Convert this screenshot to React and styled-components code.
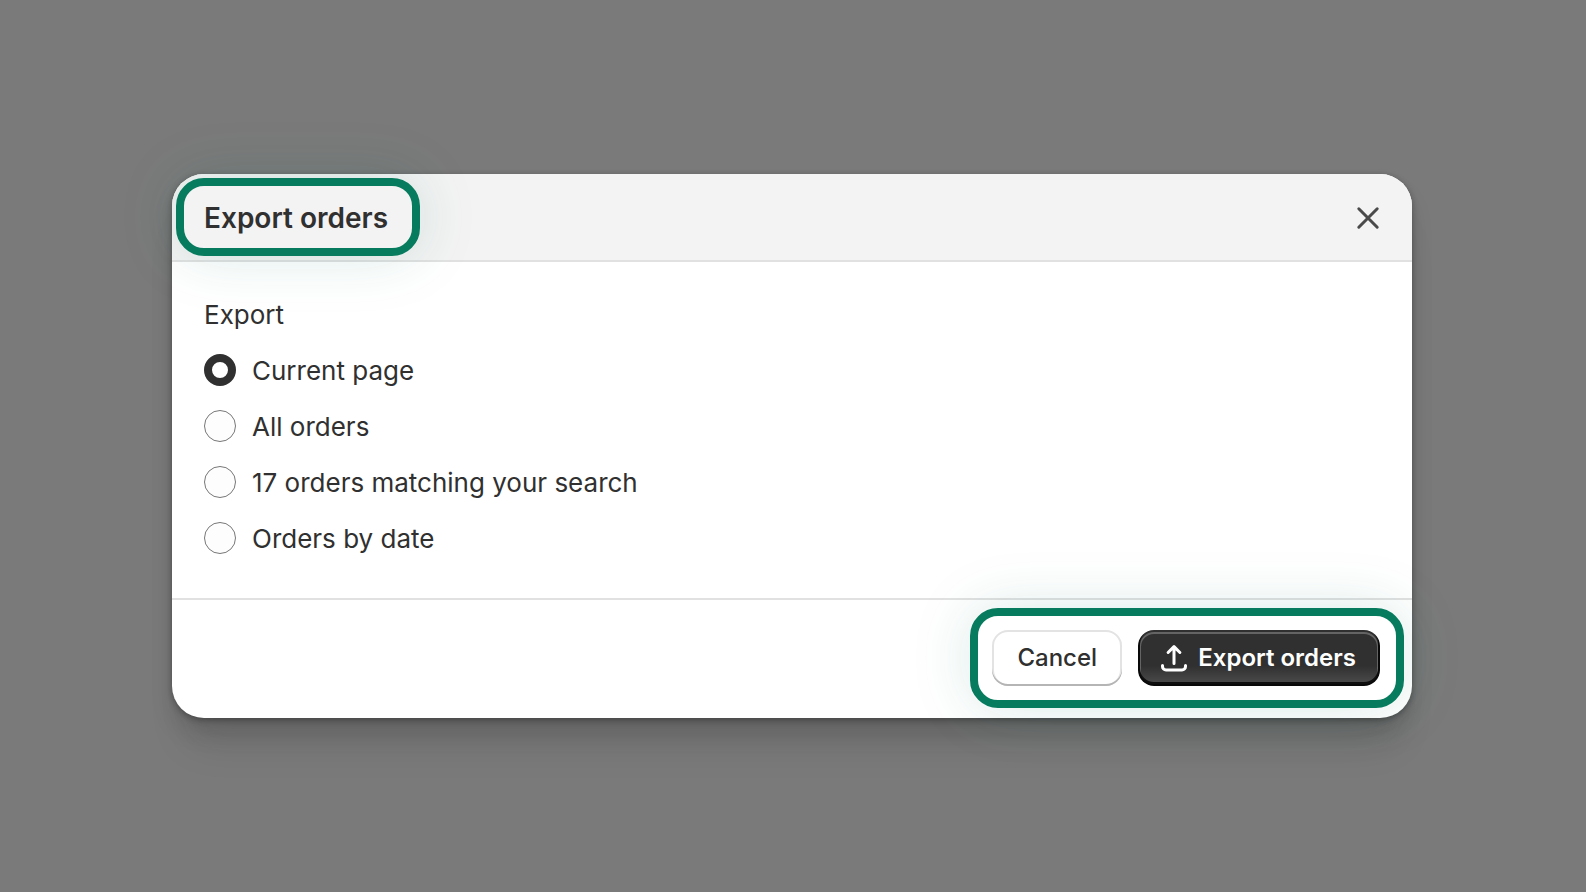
import React, { useState } from "react";
import styled, { createGlobalStyle } from "styled-components";

const GlobalStyle = createGlobalStyle`
  * {
    box-sizing: border-box;
  }
  body {
    margin: 0;
    background-color: #7a7a7a;
    color: #303030;
    font-family: Inter, "Liberation Sans", sans-serif;
    -webkit-font-smoothing: antialiased;
  }
`;

const Backdrop = styled.main`
  display: flex;
  align-items: center;
  min-height: 100vh;
  padding: 32px 174px 32px 172px;
`;

const Dialog = styled.section`
  flex: 1;
  background-color: #fff;
  border-radius: 32px;
  box-shadow: 0 40px 40px -16px rgba(26, 26, 26, 0.12),
    0 16px 24px -4px rgba(26, 26, 26, 0.18),
    0 2px 6px rgba(26, 26, 26, 0.4);
`;

const Header = styled.header`
  display: flex;
  align-items: center;
  justify-content: space-between;
  padding: 4px 24px 4px 4px;
  background-color: #f3f3f3;
  border-bottom: 2px solid #e1e1e1;
  border-radius: 32px 32px 0 0;
`;

const Highlight = styled.div`
  position: relative;
  z-index: 1;
  display: flex;
  align-items: center;
  gap: 16px;
  padding: ${(props) => props.$padding};
  border: 8px solid #077b5e;
  border-radius: 28px;
  box-shadow: 0 0 60px rgba(8, 124, 104, 0.15);
`;

const Title = styled.h2`
  margin: 0;
  font-size: 28px;
  line-height: 40px;
  font-weight: 600;
`;

const CloseButton = styled.button`
  display: flex;
  padding: 2px 0 0;
  border: none;
  background: none;
  color: #4a4a4a;
  cursor: pointer;
`;

const Icon = styled.svg`
  width: 40px;
  height: 40px;
  fill: none;
  stroke: currentColor;
  stroke-width: 1.5;
  stroke-linecap: round;
  stroke-linejoin: round;
`;

const Options = styled.fieldset`
  display: flex;
  flex-direction: column;
  align-items: flex-start;
  gap: 14px;
  margin: 0;
  padding: 32px 32px 38px;
  border: none;
  font-size: 26px;
  line-height: 42px;
`;

const Legend = styled.legend`
  float: left;
  padding: 0;
`;

const Option = styled.label`
  display: flex;
  align-items: center;
  gap: 16px;
  cursor: pointer;
`;

const Radio = styled.input`
  appearance: none;
  width: 32px;
  height: 32px;
  margin: 0 0 2px;
  border: 1px solid #777;
  border-radius: 50%;
  background-color: #fdfdfd;
  cursor: pointer;

  &:checked {
    border: 8px solid #303030;
    background-color: #fff;
  }
`;

const Footer = styled.footer`
  display: flex;
  justify-content: flex-end;
  padding: 8px 8px 10px;
  border-top: 2px solid #e1e1e1;
`;

const Button = styled.button`
  display: flex;
  align-items: center;
  justify-content: center;
  gap: 4px;
  min-width: 130px;
  height: 56px;
  padding: 0 24px;
  border: none;
  border-radius: 16px;
  background-color: #fff;
  box-shadow: inset 0 -2px 0 #b5b5b5, inset 0 0 0 2px #e3e3e3;
  color: #303030;
  font-family: inherit;
  font-size: 24px;
  line-height: 40px;
  font-weight: 550;
  cursor: pointer;
`;

const PrimaryButton = styled(Button)`
  padding-left: 16px;
  background: linear-gradient(180deg, rgba(48, 48, 48, 0) 64%, rgba(255, 255, 255, 0.15) 100%), #303030;
  box-shadow: inset 0 -2px 0 2px rgba(0, 0, 0, 0.8), inset 0 0 0 2px #303030,
    inset 0 1px 0 3px rgba(255, 255, 255, 0.25);
  color: #fff;
  font-weight: 600;
`;

const options = [
  { value: "page", label: "Current page" },
  { value: "all", label: "All orders" },
  { value: "search", label: "17 orders matching your search" },
  { value: "date", label: "Orders by date" },
];

const App = () => {
  const [selected, setSelected] = useState("page");

  return (
    <>
      <GlobalStyle />
      <Backdrop>
        <Dialog role="dialog" aria-labelledby="export-title">
          <Header>
            <Highlight $padding="12px 24px 10px 20px">
              <Title id="export-title">Export orders</Title>
            </Highlight>
            <CloseButton type="button" aria-label="Close">
              <Icon viewBox="0 0 20 20" aria-hidden="true">
                <path d="M5.4 5.4l9.2 9.2M14.6 5.4l-9.2 9.2" />
              </Icon>
            </CloseButton>
          </Header>
          <Options>
            <Legend>Export</Legend>
            {options.map((option) => (
              <Option key={option.value}>
                <Radio
                  type="radio"
                  name="export"
                  value={option.value}
                  checked={selected === option.value}
                  onChange={() => setSelected(option.value)}
                />
                {option.label}
              </Option>
            ))}
          </Options>
          <Footer>
            <Highlight $padding="14px 16px 14px 14px">
              <Button type="button">Cancel</Button>
              <PrimaryButton type="button">
                <Icon viewBox="0 0 20 20" aria-hidden="true">
                  <path d="M10 12.75v-8.4M7.05 7.25L10 4.3l2.95 2.95M4.25 13.75v.5c0 1 .8 1.75 1.75 1.75h8c.95 0 1.75-.75 1.75-1.75v-.5" />
                </Icon>
                Export orders
              </PrimaryButton>
            </Highlight>
          </Footer>
        </Dialog>
      </Backdrop>
    </>
  );
};

export default App;
